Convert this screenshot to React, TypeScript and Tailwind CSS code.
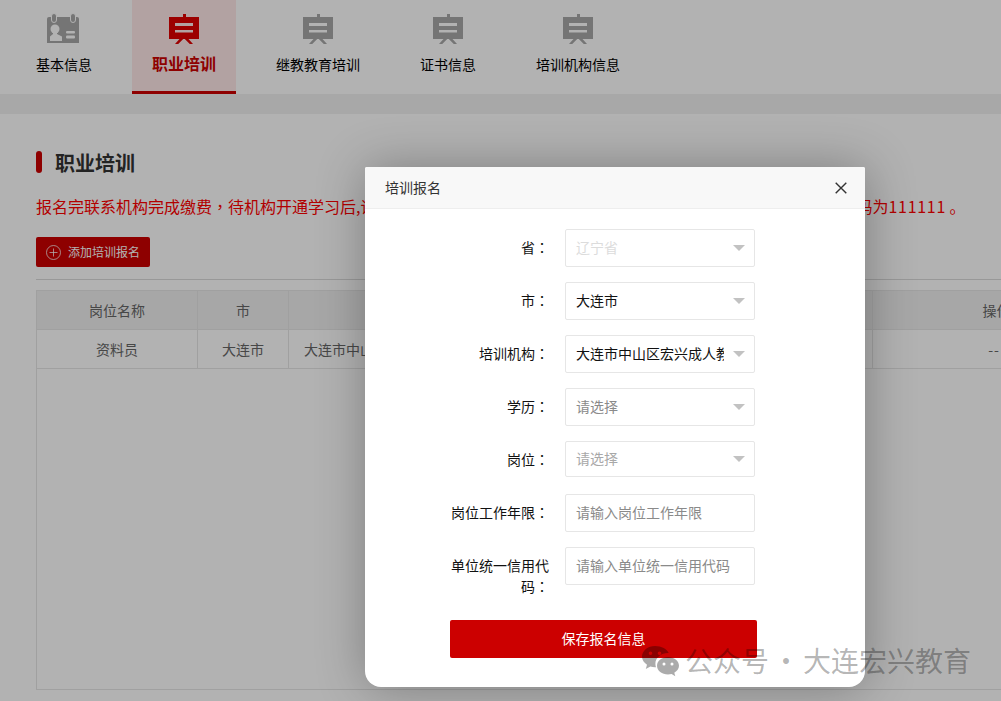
import React from 'react';

const EaselIcon: React.FC<{ color: string }> = ({ color }) => (
  <svg width="32" height="32" viewBox="0 0 32 32" className="block">
    <path
      fillRule="evenodd"
      fill={color}
      d="M15 1h3v3h13v22H20.500l4.500 5h-3.200l-5-5h-1.600l-5 5H7l4.500-5H1V4h14V1zM7 10v3h18v-3H7zM7 17v2.500h18V17H7z"
    />
  </svg>
);

const CardIcon: React.FC<{ color: string }> = ({ color }) => (
  <svg width="34" height="32" viewBox="0 0 34 32" className="block">
    <path fill={color} d="M2 4h28a2 2 0 0 1 2 2v24H0V6a2 2 0 0 1 2-2z" />
    <rect x="4.500" y="0.500" width="5" height="9" rx="2.500" fill={color} stroke="#fff" />
    <rect x="23.500" y="0.500" width="5" height="9" rx="2.500" fill={color} stroke="#fff" />
    <circle cx="8" cy="16" r="4.500" fill="#fff" />
    <path fill="#fff" d="M6 20h4v1l5 2.500V28H3v-4.500L6 21z" />
    <rect x="19" y="18" width="9" height="2.500" rx="1" fill="#fff" />
    <rect x="19" y="22.500" width="9" height="3" rx="1" fill="#fff" />
  </svg>
);

const tabs = [
  { label: '基本信息', icon: 'card' },
  { label: '职业培训', icon: 'easel', active: true },
  { label: '继教教育培训', icon: 'easel' },
  { label: '证书信息', icon: 'easel' },
  { label: '培训机构信息', icon: 'easel' },
];

const NavBar = () => (
  <div className="flex h-[94px] gap-5 bg-white pl-4">
    {tabs.map((tab) => (
      <div
        key={tab.label}
        className={
          tab.active
            ? 'flex h-[94px] flex-col items-center border-b-3 border-[#cc0000] bg-[#ffe9e9] px-5 pt-[13px]'
            : 'flex h-[94px] flex-col items-center px-5 pt-[13px]'
        }
      >
        {tab.icon === 'card' ? (
          <CardIcon color={'#a8a8a8'} />
        ) : (
          <EaselIcon color={tab.active ? '#e00000' : '#a8a8a8'} />
        )}
        <span
          className={
            tab.active
              ? 'mt-[7px] text-[16px] leading-[22px] font-bold text-[#cc0000]'
              : 'mt-[8px] text-[14px] leading-[22px] text-black'
          }
        >
          {tab.label}
        </span>
      </div>
    ))}
  </div>
);

const columns = 'grid grid-cols-[161px_91px_212px_180px_192px_248px]';
const cell = 'flex h-[39px] items-center justify-center border-r border-b border-[#e6e6e6]';

const TrainingTable = () => (
  <div className="mt-[10px] h-[400px] w-[1200px] border border-[#e6e6e6] text-[14px] text-[#666]">
    <div className={`${columns} bg-[#f0f0f0]`}>
      <div className={cell}>岗位名称</div>
      <div className={cell}>市</div>
      <div className={cell}>培训机构</div>
      <div className={cell}>学历</div>
      <div className={cell}>状态</div>
      <div className={cell}>操作</div>
    </div>
    <div className={columns}>
      <div className={cell}>资料员</div>
      <div className={cell}>大连市</div>
      <div className={`${cell} justify-start! overflow-hidden pl-[15px] whitespace-nowrap`}>大连市中山区宏兴成人教育</div>
      <div className={cell}>大专</div>
      <div className={cell}>待缴费</div>
      <div className={`${cell} pr-[5px] tracking-[1px]`}>--</div>
    </div>
  </div>
);

const Arrow = () => (
  <span className="h-0 w-0 border-x-[6px] border-t-[6px] border-x-transparent border-t-[#c2c2c2]" />
);

const SelectBox: React.FC<{ value: string; tone: string; short?: boolean }> = ({ value, tone, short }) => (
  <div
    className={`flex w-[190px] items-center justify-between rounded-[2px] border border-[#e6e6e6] bg-white pr-[9px] pl-[10px] text-[14px] ${tone} ${
      short ? 'h-[36px]' : 'h-[38px]'
    }`}
  >
    <span className="w-[148px] overflow-hidden pb-[2px] whitespace-nowrap">{value}</span>
    <Arrow />
  </div>
);

const FormRow: React.FC<{ label: string; children: React.ReactNode }> = ({ label, children }) => (
  <div className="flex h-[53px] items-start">
    <label className="w-[99px] pt-[8px] text-right text-[14px] leading-[21px] text-[#111]">
      {label}
      <span className="font-['Noto_Sans_CJK_TC',sans-serif]">：</span>
    </label>
    <div className="ml-[16px]">{children}</div>
  </div>
);

const TextBox: React.FC<{ placeholder: string }> = ({ placeholder }) => (
  <input
    placeholder={placeholder}
    className="block h-[38px] w-[190px] rounded-[2px] border border-[#e6e6e6] bg-white pb-[2px] pl-[10px] text-[14px] placeholder:text-[#8a8a8a]"
  />
);

const SignupDialog = () => (
  <div className="mt-[167px] ml-[365px] h-[520px] w-[500px] overflow-hidden rounded-t-[2px] rounded-b-[16px] bg-white shadow-[1px_1px_50px_rgba(0,0,0,0.3)]">
    <div className="flex h-[42px] items-center justify-between border-b border-[#eee] bg-[#f8f8f8] pr-[18px] pl-5">
      <span className="text-[14px] text-[#333]">培训报名</span>
      <svg width="12" height="12" viewBox="0 0 12 12">
        <path d="M.7.7l10.600 10.600M11.300.7L.7 11.300" stroke="#333" strokeWidth="1.400" fill="none" />
      </svg>
    </div>
    <div className="pt-[20px] pl-[85px]">
      <FormRow label="省">
        <SelectBox value="辽宁省" tone="text-[#dcdcdc]" />
      </FormRow>
      <FormRow label="市">
        <SelectBox value="大连市" tone="text-[#111]" />
      </FormRow>
      <FormRow label="培训机构">
        <SelectBox value="大连市中山区宏兴成人教育培训学校" tone="text-[#111]" />
      </FormRow>
      <FormRow label="学历">
        <SelectBox value="请选择" tone="text-[#8a8a8a]" />
      </FormRow>
      <FormRow label="岗位">
        <SelectBox value="请选择" tone="text-[#a8a8a8]" short />
      </FormRow>
      <FormRow label="岗位工作年限">
        <TextBox placeholder="请输入岗位工作年限" />
      </FormRow>
      <FormRow label="单位统一信用代码">
        <TextBox placeholder="请输入单位统一信用代码" />
      </FormRow>
      <button className="mt-[20px] block h-[38px] w-[307px] rounded-[2px] bg-[#cc0000] pb-[2px] text-[14px] text-white">
        保存报名信息
      </button>
    </div>
  </div>
);

const Watermark = () => (
  <div className="absolute top-[642px] left-[642px] flex items-center text-[28px] leading-[36px] whitespace-nowrap text-black/30">
    <svg width="38" height="34" viewBox="0 0 38 34" className="block">
      <path
        transform="translate(0 1)"
        fillRule="evenodd"
        fill="rgba(0,0,0,0.33)"
        d="M13 2C6 2 0 6.800 0 12.600c0 3.400 2 6.200 5 8.200L3.800 25l4.600-2.500c1.500.4 3 .7 4.600.7h1c-.4-1.200-.6-2.300-.6-3.500C13.400 13.800 19 9 26 9h.7C25 5 19.600 2 13 2zM8.500 7.500a1.800 1.800 0 1 1 0 3.600 1.800 1.800 0 0 1 0-3.600zm9 0a1.800 1.800 0 1 1 0 3.600 1.800 1.800 0 0 1 0-3.600z"
      />
      <path
        transform="translate(0 3)"
        fillRule="evenodd"
        fill="rgba(0,0,0,0.33)"
        d="M26 11c-6 0-11 3.900-11 8.800s5 8.800 11 8.800c1.300 0 2.500-.2 3.600-.5l3.700 2.100-1-3.500c2.800-1.700 4.700-4 4.700-6.900 0-4.900-5-8.800-11-8.800zm-4 5.500a1.500 1.500 0 1 1 0 3 1.500 1.500 0 0 1 0-3zm8 0a1.500 1.500 0 1 1 0 3 1.500 1.500 0 0 1 0-3z"
      />
    </svg>
    <span className="ml-[5px]">公众号</span>
    <span className="w-[34px] text-center">·</span>
    <span>大连宏兴教育</span>
  </div>
);

const App: React.FC = () => {
  return (
    <div className="relative h-[701px] w-full overflow-hidden bg-white font-['Noto_Sans_CJK_SC','Noto_Sans',sans-serif]">
      <NavBar />
      <div className="h-[20px] bg-[#f1f1f1]" />

      <div className="pt-[37px] pl-[36px]">
        <div className="flex h-[22px] items-center">
          <span className="h-[22px] w-[6px] rounded-[3px] bg-[#cc0000]" />
          <h2 className="mt-[2px] ml-[13px] text-[20px] font-bold text-[#333]">职业培训</h2>
        </div>
        <p className="mt-[21px] h-[24px] text-[16px] leading-[24px] whitespace-nowrap text-[#ff0000]">
          报名完联系机构完成缴费<span className="font-['Noto_Sans_CJK_TC',sans-serif]">，</span>待机构开通学习后,请登录学习平台进行在线学习，学习平台账号为本人身份证号，初始密码为
          <span className="tracking-[0.7px]">111111</span> 。
        </p>
        <button className="mt-[19px] flex h-[30px] w-[114px] items-center rounded-[2px] bg-[#cc0000] pl-[10px] text-[12px] text-white">
          <svg width="15" height="15" viewBox="0 0 15 15" className="block">
            <circle cx="7.500" cy="7.500" r="7" fill="none" stroke="#fff" strokeOpacity="0.75" />
            <path d="M7.500 3.500v8M3.500 7.500h8" stroke="#fff" strokeOpacity="0.75" />
          </svg>
          <span className="ml-[7px]">添加培训报名</span>
        </button>
        <div className="mt-[12px] h-px w-[1200px] bg-[#dadada]" />
        <TrainingTable />
      </div>

      <div className="absolute inset-0 flex items-start bg-black/30">
        <SignupDialog />
      </div>
      <Watermark />
    </div>
  );
};

export default App;
